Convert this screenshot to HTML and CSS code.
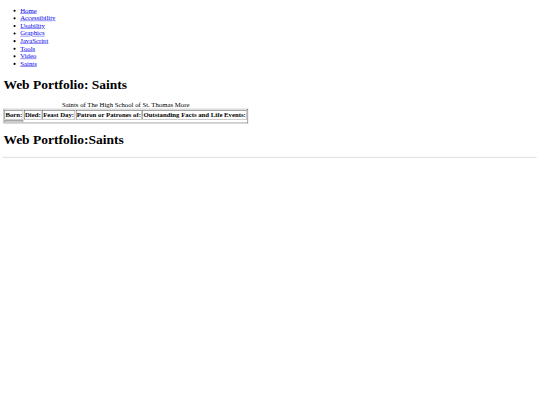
FILE: index.html
```html
<!DOCTYPE html>
<html>
<head>
<meta charset="utf-8">
<title>Web Portfolio: Saints</title>
<link rel="stylesheet" href="styles.css">
</head>
<body class="body">
<div class="screen">
<ul class="nav">
<li><a href="#">Home</a></li>
<li><a href="#">Accessibility</a></li>
<li><a href="#">Usability</a></li>
<li><a href="#">Graphics</a></li>
<li><a href="#">JavaScript</a></li>
<li><a href="#">Tools</a></li>
<li><a href="#">Video</a></li>
<li><a href="#">Saints</a></li>
</ul>
<h1 class="title">Web Portfolio: Saints</h1>
<table class="saints" border="1">
<caption>Saints of The High School of St. Thomas More</caption>
<tr><th>Born:</th><th>Died:</th><th>Feast Day:</th><th>Patron or Patrones of:</th><th>Outstanding Facts and Life Events:</th></tr>
<tr><td></td></tr>
</table>
<h1 class="title">Web Portfolio:Saints</h1>
<hr class="rule">
</div>
</body>
</html>
```

FILE: styles.css
```css
.body {
  margin: 0;
  overflow: hidden;
  font-family: "Liberation Serif", "Times New Roman", serif;
}
.screen {
  display: flow-root;
  box-sizing: border-box;
  width: 1280px;
  padding: 0 8px;
  transform: scale(0.421875);
  transform-origin: 0 0;
}
.nav a,
.saints th {
  -webkit-font-smoothing: antialiased;
}
.saints th {
  color: #000;
}
```
